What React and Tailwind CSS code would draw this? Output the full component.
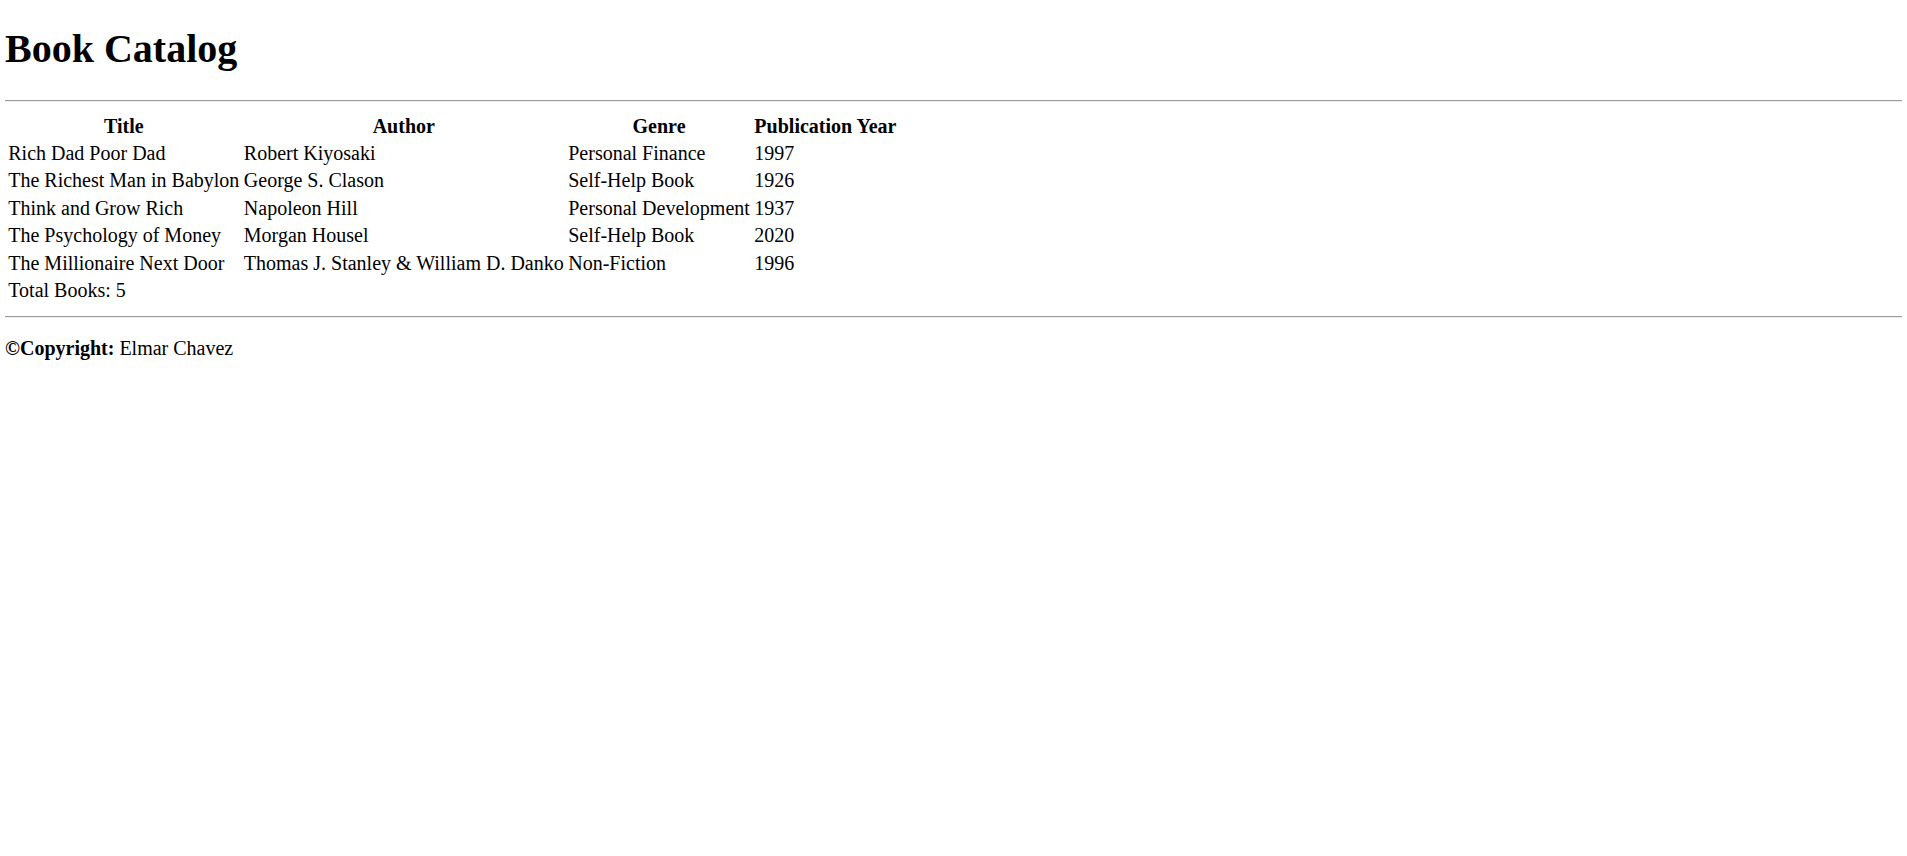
const books = [
  { title: "Rich Dad Poor Dad", author: "Robert Kiyosaki", genre: "Personal Finance", year: 1997 },
  { title: "The Richest Man in Babylon", author: "George S. Clason", genre: "Self-Help Book", year: 1926 },
  { title: "Think and Grow Rich", author: "Napoleon Hill", genre: "Personal Development", year: 1937 },
  { title: "The Psychology of Money", author: "Morgan Housel", genre: "Self-Help Book", year: 2020 },
  { title: "The Millionaire Next Door", author: "Thomas J. Stanley & William D. Danko", genre: "Non-Fiction", year: 1996 },
];

const cell = "px-[1.25px] py-[1.2px] leading-[23px]";

const App = () => {
  return (
    <div className="min-h-screen bg-white px-[5px] text-[20px] text-black font-['Liberation_Serif','Times_New_Roman',serif]">
      <h1 className="mt-[26px] mb-[28px] text-[40px] font-bold leading-[46px]">Book Catalog</h1>
      <hr className="border-t border-b border-t-[#9a9a9a] border-b-[#eeeeee]" />
      <table className="mt-[9.5px] border-separate border-spacing-x-[2.5px] border-spacing-y-[2px]">
        <thead>
          <tr>
            <th className={`${cell} text-center font-bold`}>Title</th>
            <th className={`${cell} text-center font-bold`}>Author</th>
            <th className={`${cell} text-center font-bold`}>Genre</th>
            <th className={`${cell} text-center font-bold`}>Publication Year</th>
          </tr>
        </thead>
        <tbody>
          {books.map((book) => (
            <tr key={book.title}>
              <td className={cell}>{book.title}</td>
              <td className={cell}>{book.author}</td>
              <td className={cell}>{book.genre}</td>
              <td className={cell}>{book.year}</td>
            </tr>
          ))}
          <tr>
            <td className={cell}>Total Books: {books.length}</td>
          </tr>
        </tbody>
      </table>
      <hr className="mt-[11px] border-t border-b border-t-[#9a9a9a] border-b-[#eeeeee]" />
      <p className="mt-[19px] leading-[23px]">
        <strong>©Copyright:</strong> Elmar Chavez
      </p>
    </div>
  );
};

export default App;
